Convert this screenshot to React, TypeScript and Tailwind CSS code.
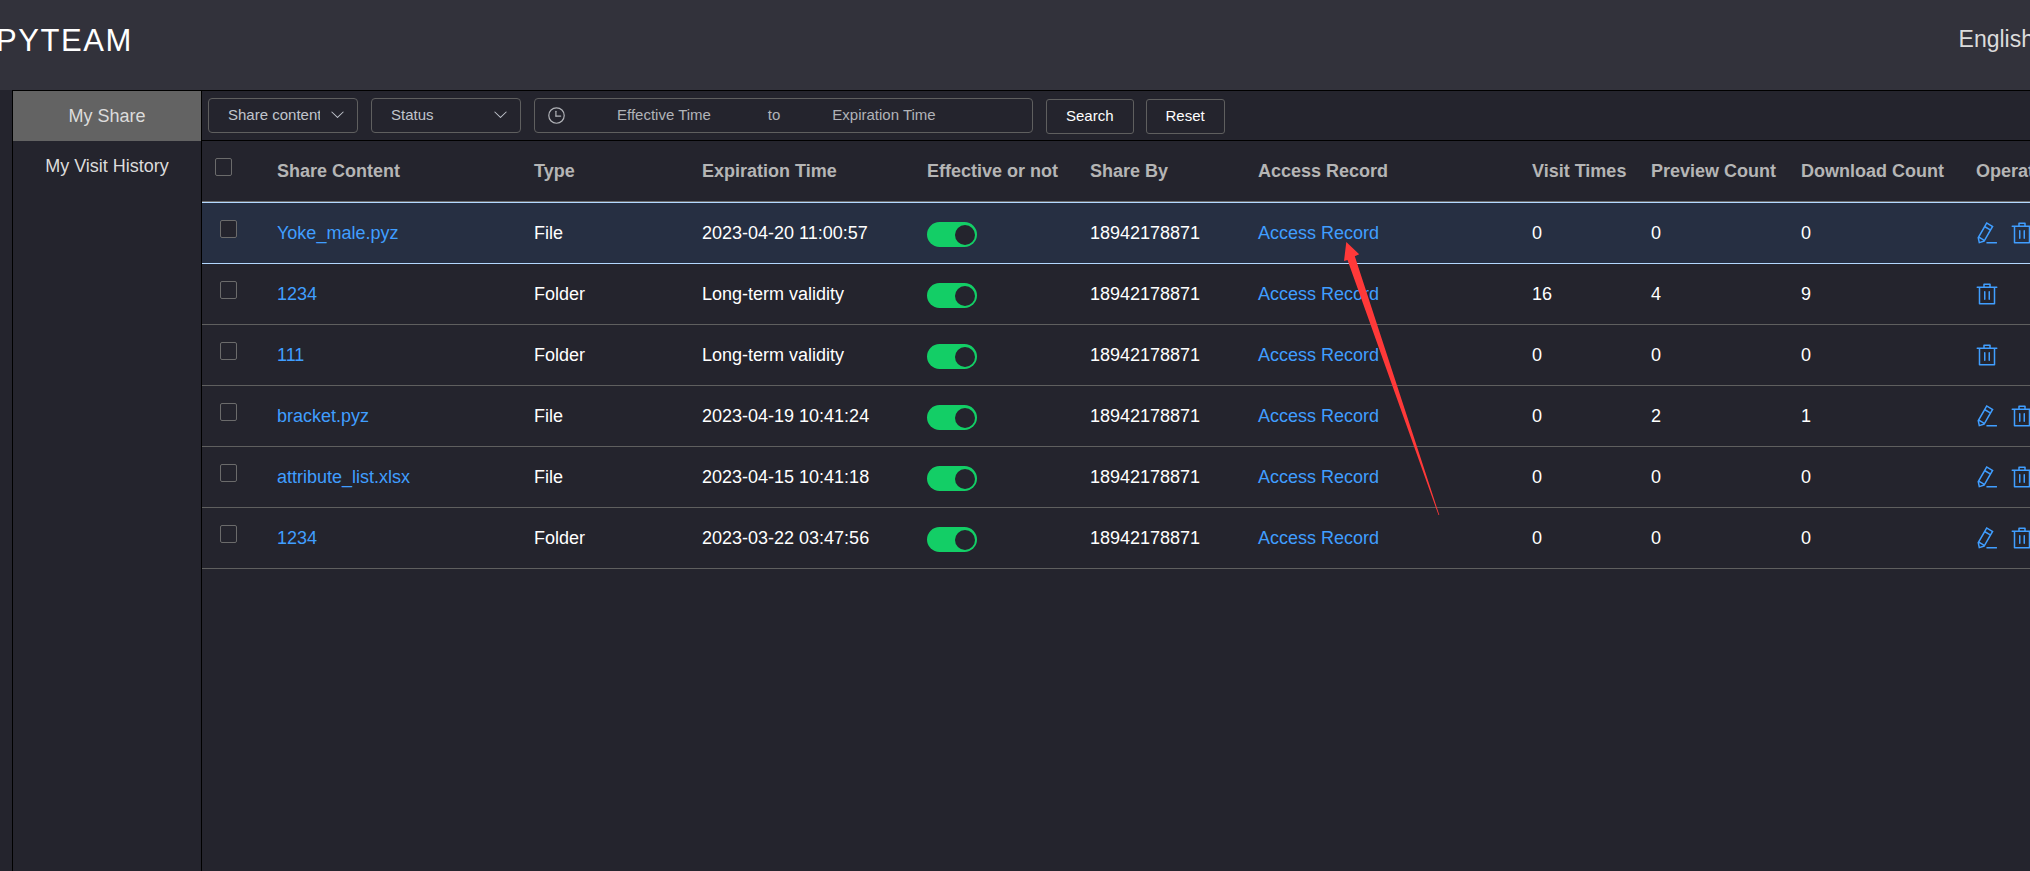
import React from "react";

type Row = {
  name: string;
  type: string;
  expires: string;
  sharedBy: string;
  visits: number;
  previews: number;
  downloads: number;
  editable: boolean;
};

const rows: Row[] = [
  { name: "Yoke_male.pyz", type: "File", expires: "2023-04-20 11:00:57", sharedBy: "18942178871", visits: 0, previews: 0, downloads: 0, editable: true },
  { name: "1234", type: "Folder", expires: "Long-term validity", sharedBy: "18942178871", visits: 16, previews: 4, downloads: 9, editable: false },
  { name: "111", type: "Folder", expires: "Long-term validity", sharedBy: "18942178871", visits: 0, previews: 0, downloads: 0, editable: false },
  { name: "bracket.pyz", type: "File", expires: "2023-04-19 10:41:24", sharedBy: "18942178871", visits: 0, previews: 2, downloads: 1, editable: true },
  { name: "attribute_list.xlsx", type: "File", expires: "2023-04-15 10:41:18", sharedBy: "18942178871", visits: 0, previews: 0, downloads: 0, editable: true },
  { name: "1234", type: "Folder", expires: "2023-03-22 03:47:56", sharedBy: "18942178871", visits: 0, previews: 0, downloads: 0, editable: true },
];

function Icon({ paths, className }: { paths: string[]; className: string }) {
  return (
    <svg viewBox="0 0 1024 1024" fill="currentColor" aria-hidden="true" className={className}>
      {paths.map((d) => (
        <path key={d} d={d} />
      ))}
    </svg>
  );
}

const trashPaths = [
  "M160 256H96a32 32 0 0 1 0-64h256V95.936a32 32 0 0 1 32-32h256a32 32 0 0 1 32 32V192h256a32 32 0 1 1 0 64h-64v672a32 32 0 0 1-32 32H192a32 32 0 0 1-32-32V256zm448-64v-64H416v64h192zM224 896h576V256H224v640zm192-128a32 32 0 0 1-32-32V416a32 32 0 0 1 64 0v320a32 32 0 0 1-32 32zm192 0a32 32 0 0 1-32-32V416a32 32 0 0 1 64 0v320a32 32 0 0 1-32 32z",
];
const penPaths = [
  "m199.04 672.64 193.984 112 224-387.968-193.92-112-224 388.032zm-23.872 60.16 32.896 148.288 144.896-45.696L175.168 732.8zM455.04 229.248l193.92 112 56.704-98.112-193.984-112-56.64 98.112zM104.32 708.8l384-665.024 304.768 175.936L409.152 884.8h.064l-248.448 78.336L104.32 708.8zm384 254.272v-64h448v64h-448z",
];
const clockPaths = [
  "M512 896a384 384 0 1 0 0-768 384 384 0 0 0 0 768zm0 64a448 448 0 1 1 0-896 448 448 0 0 1 0 896z",
  "M480 256a32 32 0 0 1 32 32v256a32 32 0 0 1-64 0V288a32 32 0 0 1 32-32z",
  "M480 512h256q32 0 32 32t-32 32H480q-32 0-32-32t32-32z",
];
const chevronPaths = [
  "M831.872 340.864 512 652.672 192.128 340.864a30.592 30.592 0 0 0-42.752 0 29.12 29.12 0 0 0 0 41.6L489.664 714.24a32 32 0 0 0 44.672 0l340.288-331.712a29.12 29.12 0 0 0 0-41.728 30.592 30.592 0 0 0-42.752 0z",
];

function FilterSelect({ label }: { label: string }) {
  return (
    <div className="relative w-[150px] shrink-0">
      <select
        aria-label={label}
        className="block h-[35px] w-full appearance-none rounded-[4px] border border-[#5f5f5f] bg-[#24242d] pr-[37px] pl-[19px] text-[15px] text-[#c0c4cc]"
      >
        <option>{label}</option>
      </select>
      <Icon paths={chevronPaths} className="pointer-events-none absolute top-2 right-[12px] size-[17px] text-[#c0c4cc]" />
    </div>
  );
}

function Tick({ label }: { label: string }) {
  return (
    <input
      type="checkbox"
      aria-label={label}
      className="block h-[18px] w-[17px] appearance-none rounded-[2px] border border-[#6b6b6b] bg-[#24242d] checked:bg-[#409eff]"
    />
  );
}

function Toggle({ label }: { label: string }) {
  const [on, setOn] = React.useState(true);
  return (
    <button
      type="button"
      role="switch"
      aria-checked={on}
      aria-label={label}
      onClick={() => setOn(!on)}
      className={
        on
          ? "flex h-[25px] w-[50px] items-center justify-end rounded-full bg-[#13ce66] px-[2px]"
          : "flex h-[25px] w-[50px] items-center justify-start rounded-full bg-[#5f5f5f] px-[2px]"
      }
    >
      <span className="size-[20px] rounded-full bg-[#24242d]" />
    </button>
  );
}

const cell = "px-4 text-left whitespace-nowrap";

export default function App() {
  return (
    <div className="relative flex min-h-screen flex-col overflow-hidden bg-[#24242d] font-['Liberation_Sans',Arial,sans-serif] text-[18px] text-white">
      <header className="flex h-[90px] items-center justify-between bg-[#32323b] pb-2">
        <h1 className="-ml-1 text-[31px] leading-[36px] tracking-wider">PYTEAM</h1>
        <button type="button" className="-mr-1 pb-1 text-[23px] leading-[26px] text-[#dcdcdc]">
          English
        </button>
      </header>

      <div className="ml-3 flex flex-1 border-t border-l border-black">
        <nav className="w-[189px] shrink-0 border-r border-black text-center leading-[50px] text-[#dcdcdc]">
          <a href="#share" aria-current="page" className="block bg-[#636363]">
            My Share
          </a>
          <a href="#history" className="block">
            My Visit History
          </a>
        </nav>

        <main className="min-w-0 flex-1 overflow-hidden">
          <form className="flex h-[50px] items-center gap-[13px] border-b border-black pl-[6px] text-[15px]" onSubmit={(e) => e.preventDefault()}>
            <FilterSelect label="Share content" />
            <FilterSelect label="Status" />
            <div className="flex h-[35px] w-[499px] items-center rounded-[4px] border border-[#5f5f5f] pl-3 text-[#b1b3b8]">
              <Icon paths={clockPaths} className="size-[19px] shrink-0" />
              <input aria-label="Effective Time" placeholder="Effective Time" className="w-[196px] text-center outline-none placeholder:text-[#b1b3b8]" />
              <span className="w-6 text-center">to</span>
              <input aria-label="Expiration Time" placeholder="Expiration Time" className="w-[196px] text-center outline-none placeholder:text-[#b1b3b8]" />
            </div>
            <div className="flex gap-3 pt-px">
              <button type="submit" className="h-[35px] rounded-[3px] border border-[#5f5f5f] px-[19px]">
                Search
              </button>
              <button type="reset" className="h-[35px] rounded-[3px] border border-[#5f5f5f] px-[19px]">
                Reset
              </button>
            </div>
          </form>

          <table className="w-full min-w-[1878px] table-fixed border-separate border-spacing-0">
            <colgroup>
              <col className="w-[59px]" />
              <col className="w-[257px]" />
              <col className="w-[168px]" />
              <col className="w-[225px]" />
              <col className="w-[163px]" />
              <col className="w-[168px]" />
              <col className="w-[274px]" />
              <col className="w-[119px]" />
              <col className="w-[150px]" />
              <col className="w-[175px]" />
              <col />
            </colgroup>
            <thead>
              <tr className="h-[61px] text-[#b5b5b5] [&>th]:border-b [&>th]:border-[#6b6b6b]">
                <th className="pt-[17px] pl-[13px] align-top">
                  <Tick label="Select all" />
                </th>
                <th className={cell}>Share Content</th>
                <th className={cell}>Type</th>
                <th className={cell}>Expiration Time</th>
                <th className={cell}>Effective or not</th>
                <th className={cell}>Share By</th>
                <th className={cell}>Access Record</th>
                <th className={cell}>Visit Times</th>
                <th className={cell}>Preview Count</th>
                <th className={cell}>Download Count</th>
                <th className={cell}>Operation</th>
              </tr>
            </thead>
            <tbody>
              {rows.map((row, i) => (
                <tr
                  key={i}
                  className={
                    i === 0
                      ? "h-[62px] bg-[#262f42] [&>td]:border-y [&>td]:border-[#b3d8ff]"
                      : "h-[61px] [&>td]:border-b [&>td]:border-[#5f5f5f]"
                  }
                >
                  <td className="pt-[17px] pl-[18px] align-top">
                    <Tick label={"Select " + row.name} />
                  </td>
                  <td className={cell}>
                    <a href="#item" className="text-[#409eff]">
                      {row.name}
                    </a>
                  </td>
                  <td className={cell}>{row.type}</td>
                  <td className={cell}>{row.expires}</td>
                  <td className="px-4 pt-[19px] align-top">
                    <Toggle label={"Effective: " + row.name} />
                  </td>
                  <td className={cell}>{row.sharedBy}</td>
                  <td className={cell}>
                    <a href="#record" className="text-[#409eff]">
                      Access Record
                    </a>
                  </td>
                  <td className={cell}>{row.visits}</td>
                  <td className={cell}>{row.previews}</td>
                  <td className={cell}>{row.downloads}</td>
                  <td className="pl-[15px]">
                    <div className="flex gap-[11px] text-[#409eff]">
                      {row.editable && (
                        <button type="button" aria-label="Edit">
                          <Icon paths={penPaths} className="size-6" />
                        </button>
                      )}
                      <button type="button" aria-label="Delete">
                        <Icon paths={trashPaths} className="size-6" />
                      </button>
                    </div>
                  </td>
                </tr>
              ))}
            </tbody>
          </table>
        </main>
      </div>

      <svg viewBox="0 0 96 274" fill="#ff3939" aria-hidden="true" className="pointer-events-none absolute top-[242px] left-[1344px] h-[274px] w-[96px]">
        <path d="M2.3 0 15.2 12.2 10.8 14.2 95.3 273 94.5 273 3.5 18 0 19Z" />
      </svg>
    </div>
  );
}
